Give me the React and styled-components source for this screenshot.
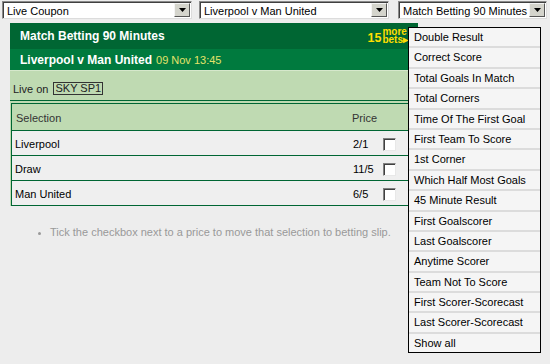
import React from "react";
import styled, { createGlobalStyle } from "styled-components";

const GlobalStyle = createGlobalStyle`
  body {
    margin: 0;
    background: #ededed;
    font-family: "Liberation Sans", Arial, sans-serif;
    font-size: 11px;
    color: #000;
  }
`;

const markets = [
  "Double Result",
  "Correct Score",
  "Total Goals In Match",
  "Total Corners",
  "Time Of The First Goal",
  "First Team To Score",
  "1st Corner",
  "Which Half Most Goals",
  "45 Minute Result",
  "First Goalscorer",
  "Last Goalscorer",
  "Anytime Scorer",
  "Team Not To Score",
  "First Scorer-Scorecast",
  "Last Scorer-Scorecast",
  "Show all",
];

const selections = [
  { name: "Liverpool", price: "2/1" },
  { name: "Draw", price: "11/5" },
  { name: "Man United", price: "6/5" },
];

const Combo = ({ value, width }) => (
  <SelectBox $width={width}>
    <SelectText>{value}</SelectText>
    <ArrowButton>
      <svg width="7" height="4" viewBox="0 0 7 4">
        <path d="M0 0h7L3.5 4z" fill="#000" />
      </svg>
    </ArrowButton>
  </SelectBox>
);

export default function App() {
  return (
    <Page>
      <GlobalStyle />
      <TopBar>
        <Combo value="Live Coupon" width={190} />
        <Combo value="Liverpool v Man United" width={190} />
        <Combo value="Match Betting 90 Minutes" width={149} />
      </TopBar>

      <Panel>
        <Header>
          <span>Match Betting 90 Minutes</span>
          <MoreBets>
            <Count>15</Count>
            <MoreText>
              <span>more</span>
              <span>bets▸</span>
            </MoreText>
          </MoreBets>
        </Header>
        <SubHeader>
          Liverpool v Man United <When>09 Nov 13:45</When>
        </SubHeader>
        <LiveRow>
          Live on <Channel>SKY SP1</Channel>
        </LiveRow>
        <Table>
          <HeadRow>
            <span>Selection</span>
            <PriceCell $head>Price</PriceCell>
          </HeadRow>
          {selections.map((s) => (
            <Row key={s.name}>
              <span>{s.name}</span>
              <PriceCell>{s.price}</PriceCell>
              <Check type="checkbox" />
            </Row>
          ))}
        </Table>
      </Panel>

      <Tips>
        <li>Tick the checkbox next to a price to move that selection to betting slip.</li>
      </Tips>

      <Dropdown>
        {markets.map((m) => (
          <Option key={m}>{m}</Option>
        ))}
      </Dropdown>
    </Page>
  );
}

const Page = styled.div`
  position: relative;
  width: 550px;
  height: 364px;
  overflow: hidden;
`;

const TopBar = styled.div`
  display: flex;
  gap: 7px;
  padding: 1px 0 0 2px;
  & > *:last-child {
    margin-left: 2px;
  }
`;

const SelectBox = styled.div`
  width: ${(p) => p.$width}px;
  height: 18px;
  box-sizing: border-box;
  display: flex;
  align-items: center;
  background: #fff;
  border: 1px solid;
  border-color: #8a8a8a #dcdcdc #dcdcdc #8a8a8a;
  box-shadow: inset 1px 1px 0 #404040;
`;

const SelectText = styled.span`
  flex: 1;
  padding-left: 4px;
  padding-top: 1px;
  white-space: nowrap;
  overflow: hidden;
`;

const ArrowButton = styled.div`
  width: 16px;
  height: 14px;
  margin-right: 1px;
  box-sizing: border-box;
  display: flex;
  align-items: center;
  justify-content: center;
  background: #d4d4cc;
  background-image: radial-gradient(#b8b8b0 0.6px, transparent 0.7px);
  background-size: 2px 2px;
  border: 1px solid;
  border-color: #f4f4f4 #555 #555 #f4f4f4;
`;

const Panel = styled.div`
  margin: 4px 0 0 10px;
  width: 408px;
  background: #bfdab2;
`;

const Header = styled.div`
  height: 26px;
  display: flex;
  align-items: center;
  padding: 0 10px;
  background: #006633;
  color: #fff;
  font-weight: bold;
  font-size: 12px;
`;

const MoreBets = styled.div`
  margin-left: auto;
  display: flex;
  align-items: center;
  color: #ffdf00;
  font-weight: bold;
`;

const Count = styled.span`
  font-size: 12.5px;
  margin-top: 3px;
`;

const MoreText = styled.span`
  display: flex;
  flex-direction: column;
  font-size: 10px;
  line-height: 8px;
  margin-left: 1px;
`;

const SubHeader = styled.div`
  height: 21px;
  display: flex;
  align-items: center;
  padding-left: 10px;
  background: #007a3e;
  color: #fff;
  font-weight: bold;
  font-size: 12px;
`;

const When = styled.span`
  font-weight: normal;
  font-size: 11px;
  color: #e3e36a;
  margin-left: 4px;
`;

const LiveRow = styled.div`
  height: 31px;
  display: flex;
  align-items: center;
  padding: 6px 0 0 3px;
  box-sizing: border-box;
  border-top: 1px solid #d6e8cc;
  border-bottom: 1px solid #006633;
  color: #222;
`;

const Channel = styled.span`
  margin-left: 5px;
  padding: 0 1px;
  line-height: 11px;
  border: 1px solid #333;
`;

const Table = styled.div`
  margin: 2px 0 0 1px;
  border: 1px solid #006633;
`;

const HeadRow = styled.div`
  height: 26px;
  display: flex;
  align-items: center;
  padding: 2px 0 0 4px;
  box-sizing: border-box;
  background: #bfdab2;
  color: #333;
`;

const Row = styled.div`
  height: 25px;
  display: flex;
  align-items: center;
  padding: 2px 0 0 3px;
  box-sizing: border-box;
  background: #efefef;
  border-top: 1px solid #006633;
`;

const PriceCell = styled.span`
  margin-left: auto;
  width: 30px;
  margin-right: ${(p) => (p.$head ? "35px" : "0")};
`;

const Check = styled.input`
  appearance: none;
  margin: 0 21px 0 0;
  width: 13px;
  height: 13px;
  background: #fff;
  border: 1px solid;
  border-color: #808080 #e8e8e8 #e8e8e8 #808080;
  box-shadow: inset 1px 1px 0 #404040;
`;

const Tips = styled.ul`
  margin: 20px 0 0;
  padding-left: 50px;
  color: #999;
  li::marker {
    font-size: 9px;
  }
`;

const Dropdown = styled.div`
  position: absolute;
  left: 408px;
  top: 27px;
  width: 133px;
  box-sizing: border-box;
  border: 1px solid #000;
  background: #f5f5f5;
`;

const Option = styled.div`
  height: 18.4px;
  line-height: 18.4px;
  padding-left: 5px;
  border-bottom: 2px solid #dcdcdc;
  white-space: nowrap;
  &:last-child {
    border-bottom: none;
  }
`;
